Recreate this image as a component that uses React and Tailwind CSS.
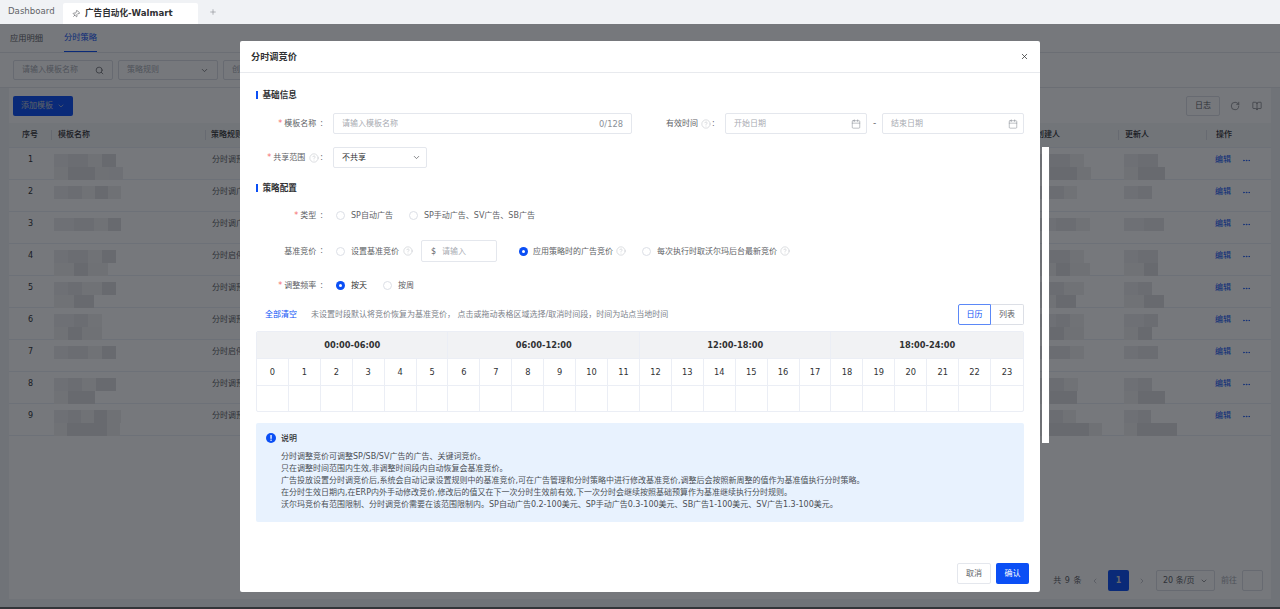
import React from "react";
import { Pin, Plus, Search, ChevronDown, X, Calendar, CircleHelp, RotateCw, BookOpen, ChevronLeft, ChevronRight, Ellipsis } from "lucide-react";

const Help = () => <CircleHelp size={10} strokeWidth={1.1} className="text-[#b4b8bf] shrink-0" />;

const Radio = ({ on, className = "" }) => (
  <span className={`inline-flex items-center justify-center w-[9px] h-[9px] rounded-full shrink-0 ${on ? "bg-[#0b4ff5]" : "border border-[#dcdfe6] bg-white"} ${className}`}>
    {on && <span className="w-[3px] h-[3px] rounded-full bg-white" />}
  </span>
);

const Req = () => <span className="text-[#f56c6c] mr-[2px]">*</span>;

const Section = ({ children, className = "" }) => (
  <div className={`flex items-center h-3 ${className}`}>
    <span className="w-[1.5px] h-2 bg-[#0b4ff5] mr-[5px]" />
    <span className="text-[8.6px] font-bold text-[#303133] pt-px">{children}</span>
  </div>
);

const Label = ({ children }) => (
  <div className="w-[67px] mr-[10px] shrink-0 flex items-center justify-end text-[8px] text-[#606266] whitespace-nowrap">{children}</div>
);

const T = ({ children }) => <span className="pt-px">{children}</span>;

const rows = [
  ["分时调预算", [[14, 20, 14, 14], [14, 27, 14, 14]]],
  ["分时调广告", [[14, 14, 13, 13, 13]]],
  ["分时调广告", [[20, 20, 14, 13]]],
  ["分时启停", [[14, 20, 14, 14], [20, 14, 20]]],
  ["分时调预算", [[14, 14, 20, 14], [20, 20]]],
  ["分时调预算", [[20, 14, 14], [14, 14, 20]]],
  ["分时启停", [[14, 20, 14, 14]]],
  ["分时调预算", [[14, 14, 14, 20], [14, 27]]],
  ["分时调预算", [[14, 13, 13, 13, 14], [13, 40, 13]]],
];

const shades = ["bg-[#ecedee]", "bg-[#e6e7e8]", "bg-[#f1f1f2]", "bg-[#dfe0e1]", "bg-[#eeeeef]"];

const Mosaic = ({ lines, className = "" }) => (
  <div className={`flex flex-col ${className}`}>
    {lines.map((l, i) => (
      <div key={i} className="flex h-[13px]">
        {l.map((w, j) => (
          <div key={j} className={`h-full ${shades[(i * 2 + j) % 5]}`} style={{ width: w }} />
        ))}
      </div>
    ))}
  </div>
);

const Background = () => (
  <div className="flex-1 flex flex-col bg-[#f1f3f6]">
    <div className="h-7 bg-white flex items-stretch pl-[10px] text-[8.25px] text-[#606266]">
      <div className="flex items-center">应用明细</div>
      <div className="flex items-center ml-[21px] text-[#0b4ff5] border-b border-[#0b4ff5]">分时策略</div>
    </div>
    <div className="h-9 bg-white border-y border-[#e6e8ec] flex items-center pl-[13px] gap-[5px] text-[8px] text-[#a8abb2]">
      <div className="w-[100px] h-[20px] border border-[#dcdfe6] rounded-[2px] flex items-center justify-between px-[8px]">
        请输入模板名称<Search size={9} className="text-[#606266]" />
      </div>
      <div className="w-[100px] h-[20px] border border-[#dcdfe6] rounded-[2px] flex items-center justify-between px-[8px]">
        策略规则<ChevronDown size={9} className="text-[#606266]" />
      </div>
      <div className="w-[100px] h-[20px] border border-[#dcdfe6] rounded-[2px] flex items-center px-[8px]">创建人</div>
    </div>
    <div className="flex-1 mx-[9px] mb-2 bg-white flex flex-col">
      <div className="h-[35px] shrink-0 flex items-center justify-between pl-1 pr-[8px]">
        <div className="w-[60px] h-[20px] rounded-[2px] bg-[#0b4ff5] text-[#c9cbd0] text-[8px] flex items-center justify-center gap-[4px]">
          添加模板<ChevronDown size={8} />
        </div>
        <div className="flex items-center text-[#606266]">
          <div className="w-[34px] h-[20px] border border-[#dcdfe6] rounded-[2px] text-[8px] flex items-center justify-center">日志</div>
          <RotateCw size={10} className="ml-[10px]" strokeWidth={1.5} />
          <BookOpen size={10} className="ml-[12px] mr-[1px]" strokeWidth={1.5} />
        </div>
      </div>
      <div className="h-[25px] shrink-0 bg-[#f6f7f9] border-b border-[#ebeef5] flex items-center text-[8px] font-medium text-[#303133]">
        <div className="w-[43px] text-center border-r border-[#dcdfe6] leading-[8px] py-[1px]">序号</div>
        <div className="w-[154px] pl-[6px] border-r border-[#dcdfe6] leading-[8px] py-[1px]">模板名称</div>
        <div className="w-[830px] pl-[5px] flex justify-between">
          <span>策略规则</span>
        </div>
        <div className="w-[82px] pl-[0px]">创建人</div>
        <div className="w-[88px] pl-[6px] border-l border-[#dcdfe6] leading-[8px] py-[1px]">更新人</div>
        <div className="pl-[9px] border-l border-[#dcdfe6] leading-[8px] py-[1px]">操作</div>
      </div>
      {rows.map(([rule, lines], i) => (
        <div key={i} className="h-8 shrink-0 border-b border-[#ebeef5] flex items-start pt-[6px] text-[8px] text-[#606266]">
          <div className="w-[43px] text-center leading-3 text-[#303133]">{i + 1}</div>
          <div className="w-[154px] pl-[2px]"><Mosaic lines={lines} /></div>
          <div className="w-[830px] pl-[6px] leading-3">{rule}</div>
          <div className="w-[82px]"><Mosaic lines={lines.map(l => l.slice(0, 3))} /></div>
          <div className="w-[88px] pl-[6px]"><Mosaic lines={lines.map(l => l.slice(0, 2))} /></div>
          <div className="pl-[9px] flex items-center gap-[11px] leading-3 text-[#0b4ff5]">
            编辑<Ellipsis size={9} strokeWidth={2} />
          </div>
        </div>
      ))}
      <div className="mt-auto h-[29px] shrink-0 flex items-start justify-end pr-[8px] text-[8px] text-[#606266]">
        <span className="mr-[9px] leading-[21px] tracking-[0.5px]">共 9 条</span>
        <ChevronLeft size={8} className="mt-[7px] mr-[9px] text-[#a8abb2]" />
        <div className="w-[21px] h-[21px] rounded-[2px] bg-[#0b4ff5] text-[#d5d6da] flex items-center justify-center font-bold">1</div>
        <ChevronRight size={8} className="mt-[7px] mx-[9px] text-[#a8abb2]" />
        <div className="w-[59px] h-[21px] ml-[1px] border border-[#dcdfe6] rounded-[2px] flex items-center justify-between px-[6px]">
          20 条/页<ChevronDown size={8} />
        </div>
        <span className="ml-[6px] mr-[5px] leading-[21px] text-[#a8abb2]">前往</span>
        <div className="w-[21px] h-[21px] border border-[#dcdfe6] rounded-[2px]" />
      </div>
    </div>
  </div>
);

const DateBox = ({ children }) => (
  <div className="w-[142px] h-[21px] border border-[#e4e7ed] rounded-[2px] flex items-center justify-between pl-[8px] pr-[5px] text-[8px] text-[#a8abb2]">
    <span className="pt-px">{children}</span>
    <Calendar size={10} strokeWidth={1.2} className="text-[#7d828a]" />
  </div>
);

const Colon = () => <span className="ml-[4px]">:</span>;

const Modal = () => (
  <div className="absolute left-[240px] top-[41px] w-[800px] h-[551px] bg-white rounded-[2px] flex flex-col">
    <div className="h-[32px] shrink-0 border-b border-[#e8eaee] flex items-center justify-between pl-[11px] pr-[11px]">
      <span className="text-[9.2px] font-bold text-[#303133] pt-px">分时调竞价</span>
      <X size={9} strokeWidth={2} className="text-[#303133]" />
    </div>
    <div className="px-4 flex flex-col">
      <Section className="mt-[16px]">基础信息</Section>

      <div className="flex h-[21px] mt-[12px]">
        <Label><Req /><T>模板名称</T><Colon /></Label>
        <div className="w-[299px] border border-[#e4e7ed] rounded-[2px] flex items-center justify-between pl-[8px] pr-[8px] text-[8px] text-[#a8abb2]">
          <T>请输入模板名称</T><span className="text-[#8b9098] text-[8.3px] pt-px">0/128</span>
        </div>
        <div className="ml-[34px] w-[59px] flex items-center text-[8px] text-[#606266] whitespace-nowrap">
          <T>有效时间</T><span className="ml-[3px] mr-[1px]"><Help /></span>:
        </div>
        <DateBox>开始日期</DateBox>
        <div className="w-[15px] flex items-center justify-center text-[9px] text-[#606266]">-</div>
        <DateBox>结束日期</DateBox>
      </div>

      <div className="flex h-[21px] mt-[13px]">
        <Label><Req /><T>共享范围</T><span className="ml-[4px] mr-[1px]"><Help /></span>:</Label>
        <div className="w-[94px] border border-[#e4e7ed] rounded-[2px] flex items-center justify-between pl-[8px] pr-[5px] text-[8px] text-[#303133]">
          <T>不共享</T><ChevronDown size={9} className="text-[#606266]" />
        </div>
      </div>

      <Section className="mt-[14px]">策略配置</Section>

      <div className="flex h-[21px] mt-[11px] items-center">
        <Label><Req /><T>类型</T><Colon /></Label>
        <div className="flex items-center text-[8px] text-[#606266]">
          <Radio className="ml-[3px] mr-[6px]" /><T>SP自动广告</T>
          <Radio className="ml-[16px] mr-[6px]" /><T>SP手动广告、SV广告、SB广告</T>
        </div>
      </div>

      <div className="flex h-[22px] mt-[14px] items-center">
        <Label><T>基准竞价</T><Colon /></Label>
        <div className="flex items-center text-[8px] text-[#606266]">
          <Radio className="ml-[3px] mr-[6px]" /><T>设置基准竞价</T>
          <span className="ml-[4px]"><Help /></span>
          <div className="ml-[8px] w-[76px] h-[22px] border border-[#e4e7ed] rounded-[2px] flex items-center pl-[9px] text-[#a8abb2]">
            <span className="text-[#606266] mr-[6px] pt-px">$</span><T>请输入</T>
          </div>
          <Radio on className="ml-[22px] mr-[5px]" /><T>应用策略时的广告竞价</T>
          <span className="ml-[3px]"><Help /></span>
          <Radio className="ml-[16px] mr-[6px]" /><T>每次执行时取沃尔玛后台最新竞价</T>
          <span className="ml-[3px]"><Help /></span>
        </div>
      </div>

      <div className="flex h-[21px] mt-[13px] items-center">
        <Label><Req /><T>调整频率</T><Colon /></Label>
        <div className="flex items-center text-[8px] text-[#606266]">
          <Radio on className="ml-[3px] mr-[6px]" /><span className="text-[#303133] pt-px">按天</span>
          <Radio className="ml-[16px] mr-[6px]" /><T>按周</T>
        </div>
      </div>

      <div className="flex h-[21px] mt-[8px] items-center text-[8px]">
        <span className="ml-[9px] text-[#0b4ff5] pt-px">全部清空</span>
        <span className="ml-[14px] text-[#7d828a] whitespace-nowrap pt-px">未设置时段默认将竞价恢复为基准竞价， 点击或拖动表格区域选择/取消时间段，时间为站点当地时间</span>
        <div className="ml-auto flex h-[21px]">
          <div className="w-[33px] flex items-center justify-center border border-[#5b88f7] rounded-l-[2px] text-[#0b4ff5] pt-px">日历</div>
          <div className="w-[33px] flex items-center justify-center border border-l-0 border-[#dcdfe6] rounded-r-[2px] text-[#606266] pt-px">列表</div>
        </div>
      </div>

      <div className="mt-[6px] h-[81px] border border-[#ebeef5] rounded-[2px] grid grid-cols-[repeat(24,minmax(0,1fr))] grid-rows-[27px_27px_27px] text-[8.25px] overflow-hidden">
        {["00:00-06:00", "06:00-12:00", "12:00-18:00", "18:00-24:00"].map((t, i) => (
          <div key={t} className={`col-span-6 bg-[#f1f2f4] border-b border-[#ebeef5] flex items-center justify-center font-bold text-[#303133] pt-px ${i < 3 ? "border-r" : ""}`}>{t}</div>
        ))}
        {Array.from({ length: 24 }, (_, i) => (
          <div key={i} className={`border-b border-[#ebeef5] flex items-center justify-center text-[#303133] pt-px ${i < 23 ? "border-r" : ""}`}>{i}</div>
        ))}
        {Array.from({ length: 24 }, (_, i) => (
          <div key={i} className={`border-[#ebeef5] ${i < 23 ? "border-r" : ""}`} />
        ))}
      </div>

      <div className="mt-[11px] h-[99px] bg-[#e8f2fe] rounded-[2px] flex pl-[10px] pt-[10px] text-[8px] text-[#4b4f55]">
        <svg width="10" height="10" viewBox="0 0 10 10" className="shrink-0">
          <circle cx="5" cy="5" r="5" fill="#0b4ff5" />
          <rect x="4.4" y="2" width="1.3" height="3.8" fill="#fff" />
          <rect x="4.4" y="6.6" width="1.3" height="1.3" fill="#fff" />
        </svg>
        <div className="ml-[5px] leading-3">
          <div className="font-medium mb-[6px] text-[#303133]">说明</div>
          <div>分时调整竞价可调整SP/SB/SV广告的广告、关键词竞价。</div>
          <div>只在调整时间范围内生效,非调整时间段内自动恢复会基准竞价。</div>
          <div>广告投放设置分时调竞价后,系统会自动记录设置规则中的基准竞价,可在广告管理和分时策略中进行修改基准竞价,调整后会按照新周整的值作为基准值执行分时策略。</div>
          <div>在分时生效日期内,在ERP内外手动修改竞价,修改后的值又在下一次分时生效前有效,下一次分时会继续按照基础预算作为基准继续执行分时规则。</div>
          <div>沃尔玛竞价有范围限制、分时调竞价需要在该范围限制内。SP自动广告0.2-100美元、SP手动广告0.3-100美元、SB广告1-100美元、SV广告1.3-100美元。</div>
        </div>
      </div>
    </div>
    <div className="mt-auto mb-2 mr-[11px] flex justify-end gap-[5px] text-[8px]">
      <div className="w-[34px] h-[21px] border border-[#e4e7ed] rounded-[2px] flex items-center justify-center text-[#606266]">取消</div>
      <div className="w-[33px] h-[21px] bg-[#0b4ff5] rounded-[2px] flex items-center justify-center text-white">确认</div>
    </div>
  </div>
);

export default function App() {
  return (
    <div className="relative w-[1280px] h-[609px] overflow-hidden flex flex-col bg-white font-['DejaVu_Sans','Noto_Sans_CJK_SC',sans-serif]">
      <div className="h-6 shrink-0 bg-[#f0f2f5] flex items-end text-[8.6px]">
        <span className="ml-2 mb-[6px] w-[47px] text-[#606266]">Dashboard</span>
        <div className="ml-2 w-[135px] h-[21px] bg-white rounded-t-[2px] flex items-center pl-[9px]">
          <Pin size={8} className="rotate-45 text-[#606266]" />
          <span className="ml-[5px] font-bold text-[#303133]">广告自动化-Walmart</span>
        </div>
        <Plus size={8} className="ml-[11px] mb-[8px] text-[#909399]" />
      </div>
      <Background />
      <div className="h-[2px] shrink-0 bg-[#666]" />
      <div className="absolute left-0 right-0 top-6 bottom-0 bg-[rgba(10,14,22,0.56)]" />
      <div className="absolute left-[1042px] top-[147px] w-[7px] h-[296px] bg-white" />
      <Modal />
    </div>
  );
}
